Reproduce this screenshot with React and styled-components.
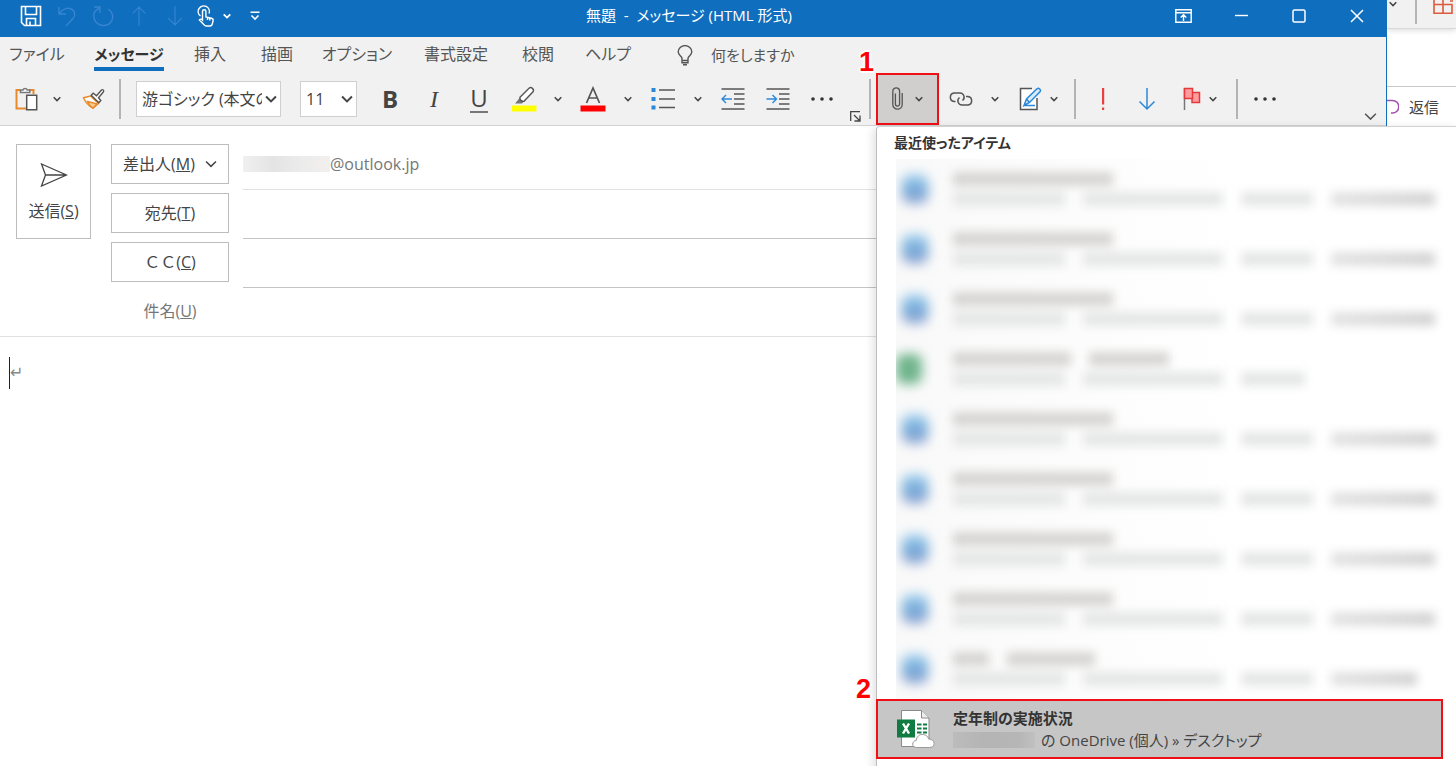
import React from "react";
import styled, { createGlobalStyle, css } from "styled-components";

const sans = `"Open Sans", "Noto Sans CJK JP", sans-serif`;

const GlobalStyle = createGlobalStyle`
  *, *::before, *::after { box-sizing: border-box; }
  body {
    margin: 0;
    overflow: hidden;
    background: #fff;
    color: #444;
    font-family: ${sans};
    font-size: 16px;
    font-feature-settings: "palt";
  }
  button, input, select, textarea {
    font: inherit;
    font-feature-settings: inherit;
    color: inherit;
    margin: 0;
    padding: 0;
    border: 0;
    border-radius: 0;
    background: none;
    outline: none;
  }
  svg { display: block; flex: none; fill: none; }
`;

const Desktop = styled.div`
  display: flex;
  min-height: 100vh;
`;

const ComposeWindow = styled.main`
  flex: 1;
  min-width: 0;
  display: flex;
  flex-direction: column;
`;

const WindowTop = styled.div`
  border-right: 1px solid #106ebe;
`;

const TitleBar = styled.header`
  display: grid;
  grid-template-columns: 1fr auto 1fr;
  align-items: start;
  height: 37px;
  background: #106ebe;
  color: #fff;
`;

const QuickAccess = styled.div`
  display: flex;
  padding-left: 13px;
`;

const WindowControls = styled.div`
  display: flex;
  justify-content: flex-end;
`;

const Title = styled.h1`
  margin: 0;
  padding-right: 8px;
  font-size: 15px;
  line-height: 30px;
  font-weight: 400;
  white-space: pre;
`;

const TitleButton = styled.button`
  display: flex;
  align-items: center;
  justify-content: center;
  width: ${(p) => p.$w || 36}px;
  height: 32px;
  color: ${(p) => (p.$dim ? "#3585d0" : "#fff")};
`;

const Ribbon = styled.section`
  background: #f1f1f1;
  border-bottom: 1px solid #d2d2d2;
`;

const Tabs = styled.nav`
  display: grid;
  grid-template-columns: 74px 110px 52px 82px 78px 120px 44px 96px;
  grid-auto-flow: column;
  justify-content: start;
  height: 35px;
  white-space: nowrap;
`;

const Tab = styled.button`
  justify-self: center;
  height: 34px;
  line-height: 26px;
  padding-top: 4px;
  color: #555;
  border-bottom: 4px solid ${(p) => (p.$active ? "#106ebe" : "transparent")};
  ${(p) =>
    p.$active &&
    css`
      font-size: 15px;
      font-weight: 700;
      color: #333;
    `}
`;

const TellMe = styled.label`
  display: flex;
  align-items: center;
  gap: 18px;
  padding-left: 21px;
  height: 36px;
`;

const TellMeInput = styled.input`
  width: 160px;
  height: 24px;
  font-size: 15px;
  &::placeholder {
    color: #555;
    opacity: 1;
  }
`;

const Toolbar = styled.div`
  display: flex;
  align-items: center;
  height: 53px;
  padding-left: 12px;
`;

const Tool = styled.button`
  display: flex;
  align-items: center;
  justify-content: center;
  gap: 8px;
  flex: none;
  width: ${(p) => p.$w || 44}px;
  height: 40px;
  color: #444;
`;

const Separator = styled.span`
  flex: none;
  width: 2px;
  height: 40px;
  margin: 0 ${(p) => p.$right}px 0 ${(p) => p.$left}px;
  background: #b4b4b4;
`;

const Picker = styled.label`
  position: relative;
  display: flex;
  flex: none;
  width: ${(p) => p.$w}px;
  margin-right: ${(p) => p.$right}px;
  svg {
    position: absolute;
    right: 4px;
    top: 12px;
    pointer-events: none;
  }
`;

const PickerSelect = styled.select`
  appearance: none;
  width: 100%;
  height: 36px;
  padding: 0 18px 0 5px;
  border: 1px solid #cfcfcf;
  background: #fff;
  overflow: hidden;
  white-space: nowrap;
`;

const Letter = styled.span`
  font-size: 24px;
  line-height: 28px;
  ${(p) => p.$bold && "font-weight: 700;"}
  ${(p) => p.$italic && `font-style: italic; font-family: "Liberation Serif", serif;`}
  ${(p) => p.$under && "border-bottom: 2px solid #777; line-height: 26px;"}
`;

const Bottom = styled.div`
  align-self: flex-end;
  display: flex;
  margin-left: ${(p) => p.$push || 0};
`;

const CornerButton = styled.button`
  display: flex;
  align-items: center;
  justify-content: center;
  width: ${(p) => p.$w || 20}px;
  height: 18px;
  color: #555;
`;

const AttachAnchor = styled.div`
  position: relative;
  flex: none;
`;

const AttachButton = styled.button`
  display: flex;
  align-items: center;
  justify-content: center;
  gap: 12px;
  width: 63px;
  height: 52px;
  border: 2px solid #f00f14;
  background: #d1cfcd;
`;

const Callout = styled.span`
  position: absolute;
  left: ${(p) => p.$left}px;
  top: ${(p) => p.$top}px;
  z-index: 6;
  font: 700 27px/30px "Liberation Sans", sans-serif;
  color: #f00;
  text-shadow: 2px 0 #fff, -2px 0 #fff, 0 2px #fff, 0 -2px #fff, 1px 1px #fff, -1px -1px #fff;
`;

const Menu = styled.div`
  position: absolute;
  z-index: 5;
  top: 53px;
  left: 0;
  width: 580px;
  padding-bottom: 12px;
  border-left: 1px solid #bdbdbd;
  border-top: 1px solid #d2d2d2;
  border-top-left-radius: 4px;
  background: #fff;
  box-shadow: -3px 2px 10px rgba(0, 0, 0, 0.12);
`;

const MenuHeading = styled.h2`
  margin: 0;
  height: 32px;
  padding: 6px 0 0 17px;
  font-size: 14px;
  line-height: 20px;
  font-weight: 700;
  color: #333;
`;

const RedactedItem = styled.button`
  display: grid;
  grid-template-columns: 40px 1fr;
  column-gap: 17px;
  align-items: center;
  width: 561px;
  height: 60px;
  margin-left: 19px;
  overflow: hidden;
  background: linear-gradient(90deg, #f9f9f9, #fff 60%);
`;

const AppBlob = styled.span`
  width: 26px;
  height: 30px;
  margin-left: ${(p) => (p.$green ? 0 : 6)}px;
  border-radius: 8px;
  background: ${(p) =>
    p.$green ? "#6fb48c" : "linear-gradient(#a9d6f2, #6fa5d6 55%, #a3aed4)"};
  filter: blur(6px);
`;

const Smears = styled.span`
  display: flex;
  flex-direction: column;
  gap: 6px;
  filter: blur(5px);
`;

const SmearLine = styled.span`
  display: flex;
  gap: 18px;
`;

const Smear = styled.span`
  width: ${(p) => p.$w}px;
  height: 14px;
  background: ${(p) => (p.$strong ? "#d6d5d3" : p.$end ? "linear-gradient(90deg, #e4e4e4, #d4d4d4)" : "#e5e6e6")};
`;

const FileItem = styled.button`
  display: flex;
  align-items: center;
  gap: 18px;
  width: 567px;
  height: 60px;
  margin-left: -1px;
  padding-left: 19px;
  border: 2px solid #f00f14;
  background: #c6c6c6;
  text-align: left;
`;

const FileText = styled.span`
  display: flex;
  flex-direction: column;
  font-size: 15px;
  line-height: 22px;
  color: #444;
  strong { color: #333; }
`;

const FilePath = styled.span`
  display: flex;
  align-items: center;
  gap: 6px;
`;

const Redacted = styled.span`
  display: block;
  flex: none;
  width: ${(p) => p.$w}px;
  height: 16px;
  background: ${(p) =>
    p.$dark
      ? "linear-gradient(90deg, #bcbcbc, #b4b4b4 40%, #b6b6b6 80%, #c0c0c0)"
      : "linear-gradient(90deg, #f0f0f0, #e4e4e4 35%, #ececec 70%, #f2f0ee)"};
`;

const MessageHeader = styled.section`
  display: flex;
  align-items: flex-start;
  gap: 20px;
  padding: 18px 0 0 16px;
  height: 211px;
  border-bottom: 1px solid #e1e1e1;
  font-size: 16px;
  line-height: 20px;
  font-feature-settings: normal;
`;

const boxed = css`
  border: 1px solid #bdbdbd;
  background: #fff;
`;

const SendButton = styled.button`
  ${boxed}
  display: flex;
  flex-direction: column;
  align-items: center;
  justify-content: center;
  gap: 14px;
  flex: none;
  width: 75px;
  height: 95px;
`;

const Fields = styled.div`
  display: flex;
  flex-direction: column;
  flex: 1;
  gap: 3px;
`;

const FieldRow = styled.div`
  display: grid;
  grid-template-columns: 118px 1fr;
  column-gap: 14px;
  height: 46px;
`;

const FieldButton = styled.button`
  ${boxed}
  display: flex;
  align-items: center;
  justify-content: center;
  gap: 10px;
  height: 40px;
`;

const FieldLabel = styled.label`
  height: 40px;
  line-height: 40px;
  text-align: center;
  color: #777;
`;

const FieldValue = styled.div`
  display: flex;
  align-items: center;
  padding-bottom: 5px;
  border-bottom: 1px solid ${(p) => p.$line};
  color: #767676;
`;

const FieldInput = styled.input`
  width: 100%;
  min-width: 0;
  height: 30px;
`;

const Editor = styled.section`
  display: flex;
  flex: 1;
  padding: 20px 0 0 9px;
`;

const Caret = styled.span`
  width: 1px;
  height: 32px;
  background: #222;
`;

const EditorText = styled.textarea`
  flex: 1;
  resize: none;
  font-family: "DejaVu Sans", sans-serif;
  font-size: 16px;
  line-height: 32px;
  color: #888;
`;

const BackWindow = styled.aside`
  width: 69px;
  overflow: hidden;
`;

const BackRibbon = styled.div`
  display: flex;
  gap: 16px;
  height: 29px;
  background: #f1f1f1;
  border-bottom: 1px solid #d8d8d8;
  box-shadow: 0 2px 5px rgba(0, 0, 0, 0.12);
`;

const BackMenuButton = styled.button`
  display: flex;
  align-items: flex-start;
  justify-content: center;
  width: 12px;
`;

const BackRule = styled.span`
  width: 2px;
  height: 24px;
  background: #b4b4b4;
`;

const ReplyButton = styled.button`
  display: flex;
  align-items: center;
  gap: 10px;
  width: 100%;
  height: 40px;
  margin-top: 57px;
  border-top: 1px solid #c8c8c8;
  font-size: 15px;
  white-space: nowrap;
`;

const Chevron = ({ size = 8, weight = 1.5 }) => (
  <svg width={size} height={size} viewBox="0 0 8 8" stroke="currentColor" strokeWidth={(weight * 8) / size}>
    <path d="M.7 2.3 4 5.6 7.3 2.3" />
  </svg>
);

const SaveIcon = () => (
  <svg width="22" height="22" viewBox="0 0 22 22" stroke="currentColor" strokeWidth="1.6">
    <path d="M1.5 1.5h19v19h-16l-3-3zM5.5 1.5v8h11v-8M6.5 20.500v-7h9v7M10 20v-3.500" />
  </svg>
);
const UndoIcon = () => (
  <svg width="20" height="22" viewBox="0 0 20 22" stroke="currentColor" strokeWidth="1.4">
    <path d="M2 2v7h7M2 9C5 5 9 2.500 13 3.500c5 1.500 6 6.500 3 10L9 21" />
  </svg>
);
const RedoIcon = () => (
  <svg width="22" height="22" viewBox="0 0 22 22" stroke="currentColor" strokeWidth="1.4">
    <path d="M2 2h6v6M8 3C3 5 1 9 2 13c2 8 12 10 17 4 3-4 2-10-3-13" />
  </svg>
);
const ArrowIcon = ({ up, w = 18, color = "currentColor", weight = 1.5 }) => (
  <svg width={w} height="24" viewBox="0 0 18 24" stroke={color} strokeWidth={weight}>
    <path d={up ? "M9 23V2M2 9l7-7 7 7" : "M9 1v21M1.500 14.500 9 22l7.500-7.500"} />
  </svg>
);
const TouchIcon = () => (
  <svg width="18" height="22" viewBox="0 0 18 22" stroke="currentColor" strokeWidth="1.4">
    <path d="M3.500 11A5.600 5.600 0 1 1 12 8.500" />
    <path d="M5.500 15V6.500a1.700 1.700 0 0 1 3.400 0V12l5.500 1.200c1.300.3 1.900 1.200 1.700 2.400L15.300 19c-.3 1.300-1.200 2-2.400 2H9.200c-1 0-1.600-.5-2.200-1.300L2.400 15c1-1.400 2.200-1 3.100 0zM10.500 12v3M12.800 13v2.500" />
  </svg>
);
const CustomizeIcon = () => (
  <svg width="10" height="10" viewBox="0 0 10 10" stroke="currentColor" strokeWidth="1.6">
    <path d="M.5 1.300h9M1.500 4.500 5 8l3.500-3.500" />
  </svg>
);
const DisplayIcon = () => (
  <svg width="17" height="14" viewBox="0 0 17 14" stroke="currentColor" strokeWidth="1.4">
    <path d="M.8.8h15.400v12.400H.8zM.8 3.700h15.400M8.500 12V6M5.700 8.500 8.500 5.700l2.800 2.800" />
  </svg>
);
const MinIcon = () => (
  <svg width="13" height="14" viewBox="0 0 13 14" stroke="currentColor" strokeWidth="1.4"><path d="M0 6.500h13" /></svg>
);
const MaxIcon = () => (
  <svg width="14" height="14" viewBox="0 0 14 14" stroke="currentColor" strokeWidth="1.5"><rect x="1" y="1" width="12" height="12" rx="1.500" /></svg>
);
const CloseIcon = () => (
  <svg width="14" height="14" viewBox="0 0 14 14" stroke="currentColor" strokeWidth="1.5"><path d="m1 1 12 12M13 1 1 13" /></svg>
);
const BulbIcon = () => (
  <svg width="16" height="21" viewBox="0 0 16 21" stroke="#555" strokeWidth="1.4">
    <path d="M5 15.500v-2.300C4.500 11.300 1.200 10 1.200 6.800a6.600 6 0 0 1 13.600 0c0 3.200-3.300 4.500-3.800 6.400v2.300zM5 15.500v2.200h6v-2.200M6 19.800h4" />
  </svg>
);
const PasteIcon = () => (
  <svg width="23" height="25" viewBox="0 0 23 25" strokeWidth="1.500">
    <path d="M5 4H1.500v18.500H11M14 4h4.500v4" stroke="#e8892b" strokeWidth="2" />
    <path d="M5.500 6.500V4H8a2.200 2.200 0 0 1 4.200 0h2.600v2.500z" fill="#fff" stroke="#777" />
    <path d="M11.700 9.200h10v14.500h-10z" fill="#fff" stroke="#555" />
  </svg>
);
const BrushIcon = () => (
  <svg width="24" height="22" viewBox="0 0 24 22" strokeWidth="1.400">
    <path d="M1.500 9.800 8.500 8l8 7.500-5.500 4.700C6.500 18 3.500 14.500 1.500 9.800z" fill="#fff" stroke="#e8892b" />
    <path d="M5.500 13.500 15 15.800l-4 4.400c-2.500-1.500-4.200-3.500-5.500-6.700z" fill="#fbc98b" stroke="#e8892b" />
    <path d="m9.200 7.300 2-2 3.300 2.500 5-5.800c1-1 2.900.5 2 1.700l-5 6 2.300 2.800-2 2.300z" fill="#fff" stroke="#555" />
  </svg>
);
const HighlightIcon = () => (
  <svg width="26" height="26" viewBox="0 0 26 26">
    <path d="M1 19.500h24.500v6H1z" fill="#ff0" />
    <path d="M4 17.500 9.500 11l4 4-2.500 2.500z" fill="#777" />
    <path d="m9 11.200 9-9c2.200-1.700 5.600 1 4 3.600l-9 9.500c-2.700.3-4.500-1.500-4-4.100z" fill="#fff" stroke="#555" strokeWidth="1.400" />
  </svg>
);
const FontColorIcon = () => (
  <svg width="26" height="26" viewBox="0 0 26 26">
    <path d="M.5 19.500h25v6H.5z" fill="#f00" />
    <path d="M6.500 17 13 2l6.500 15M9 12h8" stroke="#555" strokeWidth="1.700" />
  </svg>
);
const BulletsIcon = () => (
  <svg width="24" height="24" viewBox="0 0 24 24">
    <path d="M.5 1h4v4h-4zM.5 10h4v4h-4zM.5 18.500h4v4h-4z" fill="#2b88d8" />
    <path d="M8 3h16M8 12h16M8 20.500h16" stroke="#555" strokeWidth="1.300" />
  </svg>
);
const IndentIcon = ({ out }) => (
  <svg width="24" height="24" viewBox="0 0 24 24">
    <path d="M.5 2h23M13 7h10.500M13 12h10.500M13 17h10.500M.5 22h23" stroke="#555" strokeWidth="1.300" />
    <path d={out ? "M11 12H1M5 8l-4 4 4 4" : "M.5 12h10M6.500 8l4 4-4 4"} stroke="#2b88d8" strokeWidth="1.400" />
  </svg>
);
const Dots = styled.svg`
  && { fill: #333; }
`;
const DotsIcon = () => (
  <Dots width="22" height="4" viewBox="0 0 22 4">
    <circle cx="2" cy="2" r="1.800" /><circle cx="11" cy="2" r="1.800" /><circle cx="20" cy="2" r="1.800" />
  </Dots>
);
const LauncherIcon = () => (
  <svg width="11" height="11" viewBox="0 0 11 11" stroke="#444" strokeWidth="1.300">
    <path d="M.7 10V.7H10M4 4l5.500 5.500M10 4.500V10H4.500" />
  </svg>
);
const ClipIcon = () => (
  <svg width="11" height="23" viewBox="0 0 11 23" stroke="#555" strokeWidth="1.300">
    <path d="M10.200 6v11.500a4.700 4.700 0 0 1-9.400 0V4.200a3.400 3.400 0 0 1 6.800 0V17a2.100 2.100 0 0 1-4.200 0V6.500" />
  </svg>
);
const LinkIcon = () => (
  <svg width="24" height="16" viewBox="0 0 24 16" stroke="#555" strokeWidth="1.500">
    <path d="M6.500 10.500H5A4.300 4.300 0 0 1 5 2h6a4.200 4.200 0 0 1 2.500 7.500" />
    <path d="M17 5.500h2a4.300 4.300 0 0 1 0 8.500h-6a4.200 4.200 0 0 1-2.500-7.500" />
  </svg>
);
const SignatureIcon = () => (
  <svg width="23" height="24" viewBox="0 0 23 24" strokeWidth="1.500">
    <path d="M13 1.500H1.500v21H18V11" fill="#fff" stroke="#555" />
    <path d="M5 18.500 7.500 12 18 1.800c1.700-1.400 4.500 1 3 3L10.500 15.500zM5 18.500h11M7.500 12l3 3.500" fill="#d8ecfa" stroke="#2b88d8" />
  </svg>
);
const ImportantIcon = () => (
  <svg width="4" height="24" viewBox="0 0 4 24"><path d="M1 1h2.200v16.500H1zM1 20.500h2.200v2.500H1z" fill="#e8413c" /></svg>
);
const FlagIcon = () => (
  <svg width="18" height="24" viewBox="0 0 18 24">
    <path d="M1.500 1v22" stroke="#777" strokeWidth="1.500" />
    <path d="M9 5.500h7.500v10H9z" fill="#ff9a9e" stroke="#e03a3a" strokeWidth="1.500" />
    <path d="M1.500 1.500H9.500v10h-8z" fill="#ff9a9e" stroke="#e03a3a" strokeWidth="1.500" />
  </svg>
);
const SendIcon = () => (
  <svg width="28" height="24" viewBox="0 0 28 24" stroke="#444" strokeWidth="1.300">
    <path d="M1.500 1 26.500 12 1.500 23 5.500 12zM5.500 12h21" />
  </svg>
);
const ExcelCloudIcon = () => (
  <svg width="38" height="40" viewBox="0 0 38 40">
    <path d="M4.500 1.500h20l7.500 7.500V37.500H4.500z" fill="#fff" stroke="#8a8a8a" />
    <path d="M24.500 1.500v7.500h7.500" fill="#eee" stroke="#8a8a8a" />
    <path d="M20 15.500h4.500M26 15.500h4M20 19.500h4.500M26 19.500h4M20 23.500h4.500M26 23.500h4" stroke="#107c41" strokeWidth="2" />
    <path d="M0 10.500h18v18H0z" fill="#107c41" />
    <path d="m6 14.500 6 10M12 14.500l-6 10" stroke="#fff" strokeWidth="2.400" />
    <path d="M19.500 38.500c-5 0-5-6.500-.3-7 .5-4 3.300-6.500 7-6s5 2.500 5.300 4.500c7 0 7.500 8.500 1 8.500z" fill="#fff" stroke="#999" />
  </svg>
);
const GridIcon = () => (
  <svg width="20" height="16" viewBox="0 0 20 16" stroke="#dd5a3c" strokeWidth="1.600">
    <path d="M1 0v13.200h18V4.500H1M10 0v13.200M17 1h3" />
  </svg>
);
const ReplyArc = () => (
  <svg width="12" height="16" viewBox="0 0 12 16" stroke="#a34fb0" strokeWidth="1.500">
    <path d="M0 1.500h5.500a5.700 5.700 0 0 1 0 12.500H4" />
  </svg>
);

const longPath = { path: [112, 140, 72], end: 104 };
const recent = [
  { id: 1, title: [160], ...longPath },
  { id: 2, title: [160], ...longPath },
  { id: 3, title: [160], ...longPath },
  { id: 4, title: [118, 80], path: [112, 140, 64], end: 0, green: true },
  { id: 5, title: [160], ...longPath },
  { id: 6, title: [160], ...longPath },
  { id: 7, title: [160], ...longPath },
  { id: 8, title: [160], ...longPath },
  { id: 9, title: [36, 88], path: [112, 140, 72], end: 86 },
];

function RecentItem({ item }) {
  return (
    <RedactedItem role="menuitem" aria-label={`ファイル ${item.id}`}>
      <AppBlob $green={item.green} />
      <Smears>
        <SmearLine>
          {item.title.map((w, i) => (
            <Smear key={i} $w={w} $strong />
          ))}
        </SmearLine>
        <SmearLine>
          {item.path.map((w, i) => (
            <Smear key={i} $w={w} />
          ))}
          {item.end > 0 && <Smear $w={item.end} $end />}
        </SmearLine>
      </Smears>
    </RedactedItem>
  );
}

function AttachMenu() {
  return (
    <Menu role="menu">
      <MenuHeading>最近使ったアイテム</MenuHeading>
      {recent.map((item) => (
        <RecentItem key={item.id} item={item} />
      ))}
      <FileItem role="menuitem">
        <ExcelCloudIcon />
        <FileText>
          <strong>定年制の実施状況</strong>
          <FilePath>
            <Redacted $w={82} $dark />
            <span>の OneDrive (個人) » デスクトップ</span>
          </FilePath>
        </FileText>
      </FileItem>
    </Menu>
  );
}

export default function App() {
  return (
    <>
      <GlobalStyle />
      <Desktop>
        <ComposeWindow>
          <WindowTop>
            <TitleBar>
              <QuickAccess>
                <TitleButton aria-label="保存"><SaveIcon /></TitleButton>
                <TitleButton $dim aria-label="元に戻す"><UndoIcon /></TitleButton>
                <TitleButton $dim aria-label="やり直し"><RedoIcon /></TitleButton>
                <TitleButton $dim aria-label="前へ"><ArrowIcon up w={16} weight={1.3} /></TitleButton>
                <TitleButton $dim aria-label="次へ"><ArrowIcon w={16} weight={1.3} /></TitleButton>
                <TitleButton $w={26} aria-label="タッチ"><TouchIcon /></TitleButton>
                <TitleButton $w={16} aria-label="タッチ モード"><Chevron weight={1.8} /></TitleButton>
                <TitleButton $w={40} aria-label="カスタマイズ"><CustomizeIcon /></TitleButton>
              </QuickAccess>
              <Title>{"無題  -  メッセージ (HTML 形式)"}</Title>
              <WindowControls>
                <TitleButton $w={58} aria-label="リボンの表示"><DisplayIcon /></TitleButton>
                <TitleButton $w={58} aria-label="最小化"><MinIcon /></TitleButton>
                <TitleButton $w={58} aria-label="最大化"><MaxIcon /></TitleButton>
                <TitleButton $w={58} aria-label="閉じる"><CloseIcon /></TitleButton>
              </WindowControls>
            </TitleBar>
            <Ribbon>
              <Tabs>
                <Tab>ファイル</Tab>
                <Tab $active>メッセージ</Tab>
                <Tab>挿入</Tab>
                <Tab>描画</Tab>
                <Tab>オプション</Tab>
                <Tab>書式設定</Tab>
                <Tab>校閲</Tab>
                <Tab>ヘルプ</Tab>
                <TellMe>
                  <BulbIcon />
                  <TellMeInput placeholder="何をしますか" />
                </TellMe>
              </Tabs>
              <Toolbar>
                <Tool $w={28} aria-label="貼り付け"><PasteIcon /></Tool>
                <Tool $w={34} aria-label="貼り付けオプション"><Chevron /></Tool>
                <Tool $w={40} aria-label="書式のコピー"><BrushIcon /></Tool>
                <Separator $left={5} $right={15} />
                <Picker $w={145} $right={19}>
                  <PickerSelect aria-label="フォント">
                    <option>游ゴシック (本文のフォント)</option>
                  </PickerSelect>
                  <Chevron size={12} weight={2} />
                </Picker>
                <Picker $w={57} $right={11}>
                  <PickerSelect aria-label="サイズ">
                    <option>11</option>
                  </PickerSelect>
                  <Chevron size={12} weight={2} />
                </Picker>
                <Tool aria-label="太字"><Letter $bold>B</Letter></Tool>
                <Tool aria-label="斜体"><Letter $italic>I</Letter></Tool>
                <Tool $w={46} aria-label="下線"><Letter $under>U</Letter></Tool>
                <Tool aria-label="蛍光ペン"><HighlightIcon /></Tool>
                <Tool $w={24} aria-label="蛍光ペンの色"><Chevron /></Tool>
                <Tool $w={46} aria-label="フォントの色"><FontColorIcon /></Tool>
                <Tool $w={24} aria-label="その他の色"><Chevron /></Tool>
                <Tool $w={46} aria-label="箇条書き"><BulletsIcon /></Tool>
                <Tool $w={24} aria-label="箇条書きの種類"><Chevron /></Tool>
                <Tool $w={46} aria-label="インデント解除"><IndentIcon out /></Tool>
                <Tool aria-label="インデント"><IndentIcon /></Tool>
                <Tool aria-label="その他"><DotsIcon /></Tool>
                <Bottom>
                  <CornerButton $w={22} aria-label="ダイアログ"><LauncherIcon /></CornerButton>
                </Bottom>
                <Separator $left={3} $right={5} />
                <AttachAnchor>
                  <AttachButton aria-label="ファイルの添付" aria-expanded="true">
                    <ClipIcon />
                    <Chevron />
                  </AttachButton>
                  <Callout $left={-17} $top={-26}>1</Callout>
                  <Callout $left={-20} $top={601}>2</Callout>
                  <AttachMenu />
                </AttachAnchor>
                <Tool aria-label="リンク"><LinkIcon /></Tool>
                <Tool $w={24} aria-label="リンクの種類"><Chevron /></Tool>
                <Tool $w={62} aria-label="署名"><SignatureIcon /><Chevron /></Tool>
                <Separator $left={5} $right={5} />
                <Tool aria-label="重要度 - 高"><ImportantIcon /></Tool>
                <Tool aria-label="重要度 - 低"><ArrowIcon color="#2b88d8" /></Tool>
                <Tool $w={62} aria-label="フラグ"><FlagIcon /><Chevron /></Tool>
                <Separator $left={5} $right={5} />
                <Tool aria-label="その他のコマンド"><DotsIcon /></Tool>
                <Bottom $push="auto">
                  <CornerButton $w={32} aria-label="リボンを折りたたむ"><Chevron size={13} /></CornerButton>
                </Bottom>
              </Toolbar>
            </Ribbon>
          </WindowTop>
          <MessageHeader>
            <SendButton>
              <SendIcon />
              <span>送信(<u>S</u>)</span>
            </SendButton>
            <Fields>
              <FieldRow>
                <FieldButton>
                  <span>差出人(<u>M</u>)</span>
                  <Chevron size={12} />
                </FieldButton>
                <FieldValue $line="#e1e1e1">
                  <Redacted $w={87} />
                  <span>@outlook.jp</span>
                </FieldValue>
              </FieldRow>
              <FieldRow>
                <FieldButton><span>宛先(<u>T</u>)</span></FieldButton>
                <FieldValue $line="#c4c4c4"><FieldInput aria-label="宛先" /></FieldValue>
              </FieldRow>
              <FieldRow>
                <FieldButton><span>ＣＣ(<u>C</u>)</span></FieldButton>
                <FieldValue $line="#c4c4c4"><FieldInput aria-label="CC" /></FieldValue>
              </FieldRow>
              <FieldRow>
                <FieldLabel htmlFor="subject">件名(<u>U</u>)</FieldLabel>
                <FieldValue $line="transparent"><FieldInput id="subject" /></FieldValue>
              </FieldRow>
            </Fields>
          </MessageHeader>
          <Editor>
            <Caret />
            <EditorText aria-label="本文" defaultValue="↵" />
          </Editor>
        </ComposeWindow>
        <BackWindow>
          <BackRibbon>
            <BackMenuButton aria-label="展開"><Chevron /></BackMenuButton>
            <BackRule />
            <GridIcon />
          </BackRibbon>
          <ReplyButton>
            <ReplyArc />
            <span>返信</span>
          </ReplyButton>
        </BackWindow>
      </Desktop>
    </>
  );
}
